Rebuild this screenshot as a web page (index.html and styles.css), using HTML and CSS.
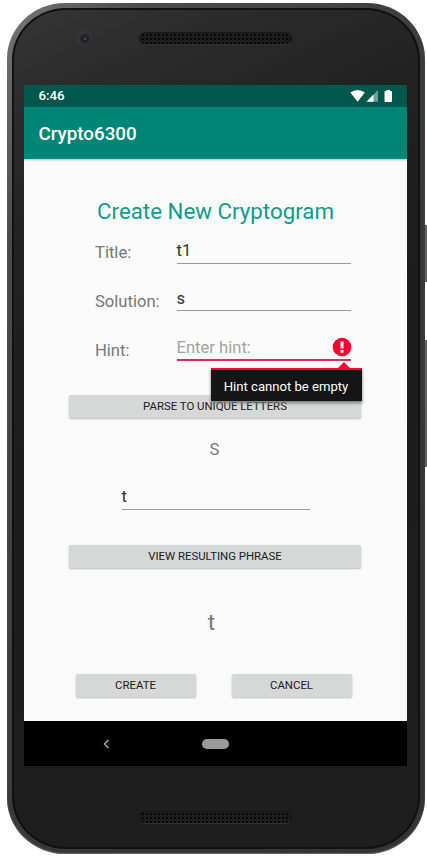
FILE: index.html
```html
<!DOCTYPE html>
<html lang="en">
<head>
<meta charset="utf-8">
<title>Crypto6300</title>
<link rel="stylesheet" href="styles.css">
</head>
<body>
<div class="phone">
  <i class="side-key power"></i>
  <i class="side-key volume"></i>
  <div class="bezel">
    <div class="top-bezel">
      <i class="camera"></i>
      <i class="speaker"></i>
    </div>
    <div class="screen">
      <div class="status">
        <span class="clock">6:46</span>
        <svg class="status-icons" width="44" height="14" viewBox="0 0 44 14">
          <path d="M0.300 3.500Q7.500-1.500 14.900 3.500L7.600 12.800Z" fill="#fff"/>
          <path d="M16.500 12.800L28 1V12.800Z" fill="#709f96"/>
          <path d="M16.500 12.800L23.500 5.600V12.800Z" fill="#fff"/>
          <path d="M36.500 2V1H40V2H41Q42 2 42 3V12Q42 13 41 13H35.500Q34.500 13 34.500 12V3Q34.500 2 35.500 2Z" fill="#fff"/>
        </svg>
      </div>
      <header class="app-bar"><span>Crypto6300</span></header>
      <main class="content">
        <h1><span>Create New Cryptogram</span></h1>
        <div class="field title-field"><label><span>Title:</span></label><div class="input"><span>t1</span></div></div>
        <div class="field solution-field"><label><span>Solution:</span></label><div class="input"><span>s</span></div></div>
        <div class="field hint-field">
          <label><span>Hint:</span></label>
          <div class="input invalid"><span>Enter hint:</span>
            <svg class="error-icon" width="20" height="20" viewBox="0 0 20 20"><circle cx="10" cy="10" r="9.300" fill="#ff0030"/><path d="M8.500 4.500h3v7h-3zM8.500 13h3v2.700h-3z" fill="#fff"/></svg>
            <div class="error-popup"><span>Hint cannot be empty</span></div>
          </div>
        </div>
        <button class="wide parse"><span>PARSE TO UNIQUE LETTERS</span></button>
        <div class="letter"><span>S</span></div>
        <div class="input replacement"><span>t</span></div>
        <button class="wide view"><span>VIEW RESULTING PHRASE</span></button>
        <div class="result"><span>t</span></div>
        <div class="actions"><button><span>CREATE</span></button><button><span>CANCEL</span></button></div>
      </main>
      <nav class="nav-bar">
        <svg class="back" width="8" height="10" viewBox="0 0 8 10"><path d="M6.500 1L2.500 5L6.500 9" fill="none" stroke="#aaa" stroke-width="1.500"/></svg>
        <i class="home"></i>
      </nav>
    </div>
    <div class="bottom-bezel"><i class="speaker"></i></div>
  </div>
</div>
</body>
</html>
```
FILE: styles.css
```css
* { box-sizing: border-box; }
body { margin: 0; width: 427px; height: 860px; overflow: hidden; background: #fff; font-family: Roboto, "Liberation Sans", sans-serif; }
.phone { position: relative; width: 418px; height: 851px; margin: 3px 0 0 7px; padding: 5px; border-radius: 58px / 56px; background: linear-gradient(120deg, #777 0, #4b4b4d 15%, #38363a 60%, #343236 100%); box-shadow: inset 0 -1px 1px #666; }
.bezel { width: 408px; height: 841px; border: 2px solid #111; border-radius: 54px / 52px; background: linear-gradient(155deg, #363636 0, #2d2d2d 8%, #212121 25%, #1d1d1d 45%, #1e1e1e 100%); padding: 0 10px; overflow: hidden; }
.side-key { position: absolute; right: -2px; width: 2px; background: #656565; }
.power { top: 222px; height: 57px; }
.volume { top: 337px; height: 127px; }
.top-bezel { height: 75px; display: flex; align-items: flex-start; }
.camera { width: 15px; height: 15px; margin: 20px 0 0 52px; border-radius: 50%; border: 1px solid #373737; background: radial-gradient(circle at 62% 60%, #794850 0 5%, #24222a 14% 34%, #343436 52%); }
.speaker { display: block; width: 153px; height: 13px; border-radius: 7px; border: 1px solid #171717; border-bottom-color: #303030; background: radial-gradient(circle, #080808 0 0.800px, #1d1d1d 1.300px) 1px 0 / 4px 4px; }
.top-bezel .speaker { margin: 22px 0 0 48px; }
.screen { width: 383px; height: 681px; background: #fafafa; overflow: hidden; }
.status { height: 22px; background: #00574b; display: flex; align-items: center; justify-content: space-between; padding: 0 13px 0 14.500px; color: #fff; }
.clock { font-size: 13.300px; font-weight: 500; line-height: 20px; }
.app-bar { position: relative; height: 52px; background: #008577; box-shadow: 0 1px 2px #bbb; padding: 2px 0 0 14.500px; display: flex; align-items: center; color: #fff; font-size: 18.800px; font-weight: 500; }
.content { height: 562px; padding: 37px 45px 0; display: flex; flex-direction: column; align-items: center; }
h1 { margin: 0; height: 30px; line-height: 30px; font-size: 22.300px; font-weight: 400; color: #119b8a; white-space: nowrap; }
.field { width: 256px; display: grid; grid-template-columns: 81.500px 174.500px; margin-left: 15px; }
label { color: #777; font-size: 16.600px; display: flex; align-items: center; }
.input { position: relative; display: flex; align-items: center; color: #303030; font-size: 16.600px; border-bottom: 1px solid #999; }
.title-field { height: 38px; }
.title-field label { padding-top: 15px; }
.title-field .input { padding-top: 12px; }
.solution-field { height: 47px; }
.solution-field label { padding-top: 27px; }
.solution-field .input { padding-top: 22px; }
.hint-field { height: 50px; }
.hint-field label { padding-top: 28px; }
.hint-field .input { padding-top: 24px; color: #a3a3a3; border-bottom: 2px solid #d72b66; }
.error-icon { position: absolute; right: -1px; bottom: 2px; }
.hint-field .error-popup { position: absolute; z-index: 2; left: 34px; top: 57px; width: 151px; height: 33px; background: #151515; border-top: 2px solid #ff0030; box-shadow: 0 2px 3px #777; color: #fff; font-size: 13.100px; line-height: 34px; text-align: center; white-space: nowrap; }
.error-popup::before { content: ""; position: absolute; right: 12px; top: -8px; border: 6px solid transparent; border-top: 0; border-bottom-color: #ff0030; }
button { height: 23px; padding: 0; border: 0; border-radius: 1.500px; background: #d6d7d7; box-shadow: 0 1px 2px #bbb; color: #202020; font: 400 11.400px/23px Roboto, "Liberation Sans", sans-serif; }
.wide { width: 292px; flex: none; margin-left: -1px; }
.parse { margin-top: 34px; }
.letter { height: 20px; line-height: 20px; margin: 22px 0 0 -2px; font-size: 16.600px; color: #777; }
.replacement { width: 188px; height: 29px; margin: 21px 0 0 0; padding-top: 2px; }
.view { margin-top: 35px; }
.result { height: 28px; line-height: 29px; margin: 40px 0 0 -8px; color: #777; font-size: 22.300px; }
.actions { width: 276px; display: flex; justify-content: space-between; margin: 38px 0 0 -4px; }
.actions button { width: 120px; }
.nav-bar { height: 45px; background: #000; display: flex; align-items: center; padding-left: 78px; }
.home { width: 27px; height: 10px; margin-left: 92px; border-radius: 5px; background: #9b9b9b; }
.bottom-bezel { height: 80px; padding: 45px 0 0 115px; }
```
